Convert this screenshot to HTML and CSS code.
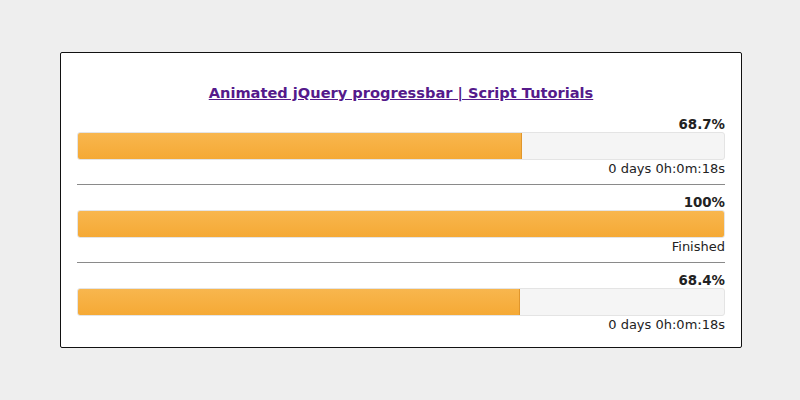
FILE: index.html
```html
<!DOCTYPE html>
<html>
<head>
<meta charset="utf-8">
<link rel="stylesheet" href="styles.css">
</head>
<body>
<div class="box">
  <h1 class="title"><a href="#">Animated jQuery progressbar | Script Tutorials</a></h1>
  <div class="item">
    <div class="pct">68.7%</div>
    <div class="track"><div class="fill" style="width:68.7%"></div></div>
    <div class="time">0 days 0h:0m:18s</div>
  </div>
  <div class="sep"></div>
  <div class="item">
    <div class="pct">100%</div>
    <div class="track"><div class="fill full" style="width:100%"></div></div>
    <div class="time">Finished</div>
  </div>
  <div class="sep"></div>
  <div class="item">
    <div class="pct">68.4%</div>
    <div class="track"><div class="fill" style="width:68.4%"></div></div>
    <div class="time">0 days 0h:0m:18s</div>
  </div>
</div>
</body>
</html>
```
FILE: styles.css
```css
html, body {
  margin: 0;
  padding: 0;
  background: #eeeeee;
  font-family: "DejaVu Sans", Verdana, sans-serif;
}
.box {
  width: 648px;
  margin: 52px 0 0 60px;
  padding: 16px 16px 14px;
  background: #fff;
  border: 1px solid #111;
  border-radius: 2px;
}
.title {
  margin: 15px 0 16px;
  text-align: center;
  font-size: 14.6px;
  line-height: 18px;
  font-weight: bold;
}
.title a {
  color: #551a8b;
  text-decoration: underline;
}
.item {
  display: flex;
  flex-direction: column;
}
.pct {
  text-align: right;
  font-size: 13.4px;
  line-height: 14px;
  font-weight: bold;
  color: #222;
}
.track {
  height: 28px;
  box-sizing: border-box;
  background: #f5f5f5;
  border: 1px solid #e4e4e4;
  border-radius: 3px;
  overflow: hidden;
  display: flex;
}
.fill {
  height: 100%;
  background: linear-gradient(#f8b64e, #f5a935);
  border-right: 1px solid #e0962c;
  box-sizing: border-box;
}
.fill.full {
  border-right: none;
}
.time {
  text-align: right;
  font-size: 13px;
  line-height: 16px;
  margin-top: 1px;
  color: #222;
}
.sep {
  height: 1px;
  background: #8a8a8a;
  margin: 7px 0 11px;
}
```
